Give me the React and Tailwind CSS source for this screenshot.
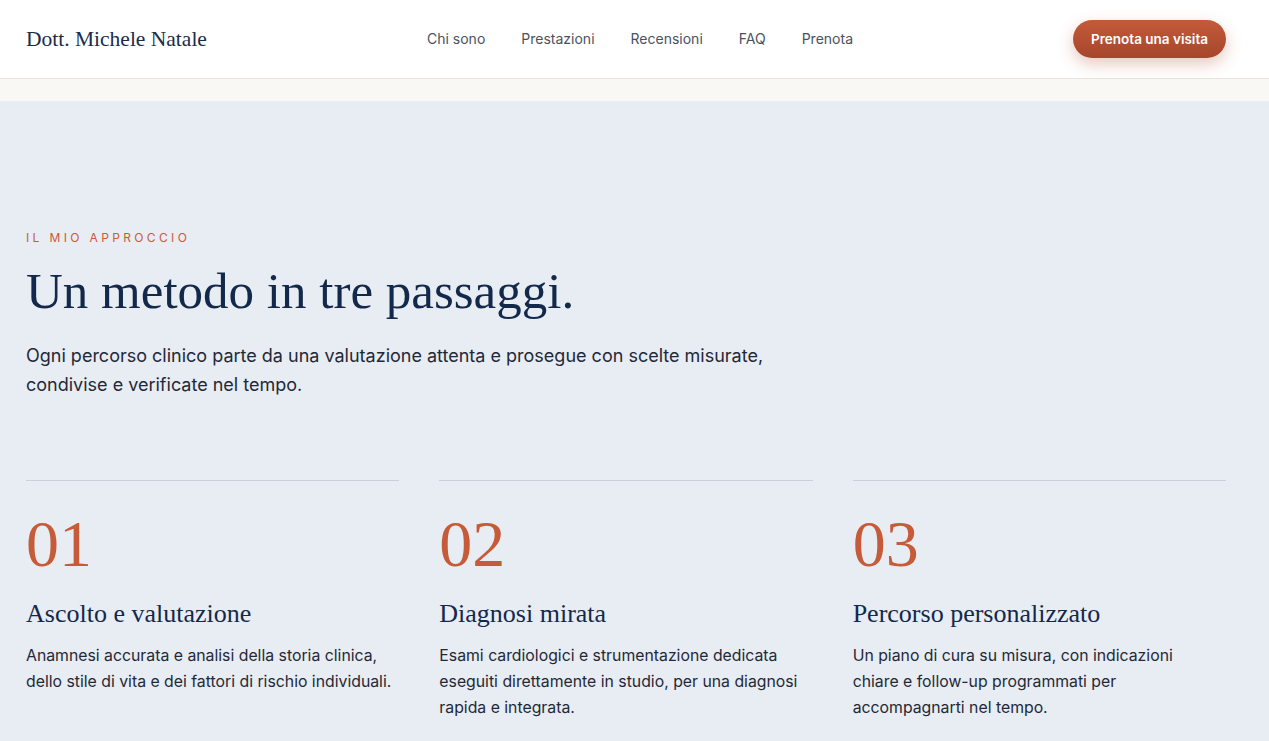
import React from 'react';

const navLinks = ['Chi sono', 'Prestazioni', 'Recensioni', 'FAQ', 'Prenota'];

const steps = [
    {
        num: '01',
        title: 'Ascolto e valutazione',
        text: 'Anamnesi accurata e analisi della storia clinica, dello stile di vita e dei fattori di rischio individuali.',
    },
    {
        num: '02',
        title: 'Diagnosi mirata',
        text: 'Esami cardiologici e strumentazione dedicata eseguiti direttamente in studio, per una diagnosi rapida e integrata.',
    },
    {
        num: '03',
        title: 'Percorso personalizzato',
        text: 'Un piano di cura su misura, con indicazioni chiare e follow-up programmati per accompagnarti nel tempo.',
    },
];

const serif = "font-['Liberation_Serif',serif]";
const sans = "font-['Inter',sans-serif]";

const App = () => {
    return (
        <div className={`min-h-screen bg-[#e8ecf3] ${sans}`}>
            {/* Header */}
            <header className="bg-white border-b border-[#e9e3dc]">
                <div className="w-[1200px] ml-[26px] h-[78px] flex items-center justify-between">
                    <a className={`${serif} text-[21.5px] text-[#1b2c48]`}>Dott. Michele Natale</a>
                    <nav className="flex items-center gap-[36px] text-[14px] text-[#4a5261] pb-[2px]">
                        {navLinks.map(link => (
                            <a key={link}>{link}</a>
                        ))}
                    </nav>
                    <button className="h-[38px] px-[18px] rounded-full bg-gradient-to-b from-[#c45a3b] to-[#a6462c] text-white text-[13.5px] font-semibold shadow-[0_6px_16px_rgba(176,72,44,0.3)]">
                        Prenota una visita
                    </button>
                </div>
            </header>
            <div className="h-[22px] bg-[#faf8f4]" />

            {/* Approach section */}
            <section className="w-[1200px] ml-[26px] pt-[129px] pb-[40px]">
                <p className="text-[12px] leading-4 tracking-[0.28em] text-[#c85a3a] uppercase">Il mio approccio</p>
                <h2 className={`${serif} mt-[19px] text-[51px] leading-[53px] text-[#13294b]`}>
                    Un metodo in tre passaggi.
                </h2>
                <p className="mt-[23px] max-w-[760px] text-[18px] leading-[29px] text-[#1f2937]">
                    Ogni percorso clinico parte da una valutazione attenta e prosegue con scelte misurate, condivise e verificate nel tempo.
                </p>

                <div className="mt-[81px] grid grid-cols-3 gap-[40px]">
                    {steps.map(step => (
                        <div key={step.num} className="border-t border-[#cbd0da] pt-[27px]">
                            <div className={`${serif} text-[66px] leading-[72px] text-[#c65b3a]`}>{step.num}</div>
                            <h3 className={`${serif} mt-[18px] text-[26px] leading-[32px] text-[#13294b]`}>{step.title}</h3>
                            <p className="mt-[13px] max-w-[368px] text-[15.8px] leading-[26px] text-[#1f2937]">{step.text}</p>
                        </div>
                    ))}
                </div>
            </section>
        </div>
    );
};

export default App;
